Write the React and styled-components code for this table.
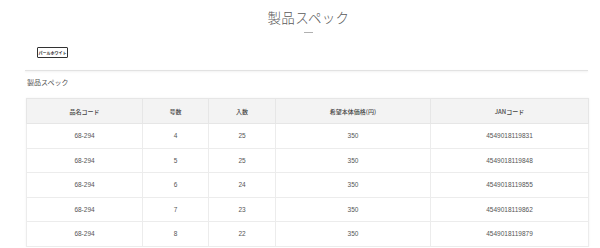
import React from "react";
import styled, { createGlobalStyle } from "styled-components";

const GlobalStyle = createGlobalStyle`
  html, body {
    margin: 0;
    padding: 0;
    background: #fff;
  }
  body {
    font-family: "Liberation Sans", "Noto Sans CJK JP", sans-serif;
    color: #555;
  }
`;

const rows = [
  { code: "68-294", size: 4, qty: 25, price: 350, jan: "4549018119831" },
  { code: "68-294", size: 5, qty: 25, price: 350, jan: "4549018119848" },
  { code: "68-294", size: 6, qty: 24, price: 350, jan: "4549018119855" },
  { code: "68-294", size: 7, qty: 23, price: 350, jan: "4549018119862" },
  { code: "68-294", size: 8, qty: 22, price: 350, jan: "4549018119879" },
];

const columns = [
  { label: "品名コード", width: 116 },
  { label: "号数", width: 66 },
  { label: "入数", width: 67 },
  { label: "希望本体価格(円)", width: 155 },
  { label: "JANコード", width: 158 },
];

export default function App() {
  return (
    <>
      <GlobalStyle />
      <Page>
        <Title>製品スペック</Title>
        <Dash />
        <BadgeRow>
          <Badge>パールホワイト</Badge>
        </BadgeRow>
        <Divider />
        <Label>製品スペック</Label>
        <SpecTable>
          <colgroup>
            {columns.map((c) => (
              <col key={c.label} style={{ width: c.width }} />
            ))}
          </colgroup>
          <thead>
            <tr>
              {columns.map((c) => (
                <Th key={c.label}>{c.label}</Th>
              ))}
            </tr>
          </thead>
          <tbody>
            {rows.map((r) => (
              <Tr key={r.jan}>
                <Td>{r.code}</Td>
                <Td>{r.size}</Td>
                <Td>{r.qty}</Td>
                <Td>{r.price}</Td>
                <Td>{r.jan}</Td>
              </Tr>
            ))}
          </tbody>
        </SpecTable>
      </Page>
    </>
  );
}

const Page = styled.div`
  padding: 9px 12px 0 25px;
  display: flex;
  flex-direction: column;
`;

const Title = styled.h1`
  margin: 0;
  padding-left: 4px;
  font-family: "Noto Sans CJK JP", sans-serif;
  font-size: 13.5px;
  line-height: 17px;
  font-weight: 300;
  letter-spacing: 0.3px;
  color: #5a5a5a;
  text-align: center;
`;

const Dash = styled.div`
  align-self: center;
  margin: 6px 0 0 3px;
  width: 9px;
  height: 1px;
  background: #b0b0b0;
`;

const BadgeRow = styled.div`
  display: flex;
  margin-top: 14px;
  padding-left: 12px;
`;

const Badge = styled.span`
  display: flex;
  align-items: center;
  justify-content: center;
  box-sizing: border-box;
  width: 31px;
  height: 11px;
  border: 1px solid #333;
  border-radius: 1px;
  font-family: "Noto Sans CJK JP", sans-serif;
  font-size: 4px;
  font-weight: 700;
  color: #222;
  white-space: nowrap;
`;

const Divider = styled.div`
  margin-top: 12px;
  height: 1px;
  background: #e2e2e2;
  box-shadow: 0 1px 2px rgba(0, 0, 0, 0.08);
`;

const Label = styled.div`
  margin-top: 6px;
  padding-left: 2px;
  font-family: "Noto Sans CJK JP", sans-serif;
  font-size: 7px;
  line-height: 10px;
  color: #555;
`;

const SpecTable = styled.table`
  margin: 11px 0 0 1px;
  width: 562px;
  table-layout: fixed;
  border-collapse: collapse;
  box-shadow: 0 0 2px rgba(0, 0, 0, 0.06);
`;

const Th = styled.th`
  height: 24px;
  padding: 0;
  background: #f3f3f3;
  border: 1px solid #e6e6e6;
  font-family: "Noto Sans CJK JP", sans-serif;
  font-size: 6px;
  font-weight: 500;
  color: #444;
  text-align: center;
  vertical-align: middle;
`;

const Tr = styled.tr`
  height: 24.5px;
`;

const Td = styled.td`
  padding: 0;
  background: #fff;
  border: 1px solid #ececec;
  font-family: "Liberation Sans", "Noto Sans CJK JP", sans-serif;
  font-size: 6.5px;
  color: #555;
  text-align: center;
  vertical-align: middle;
`;
